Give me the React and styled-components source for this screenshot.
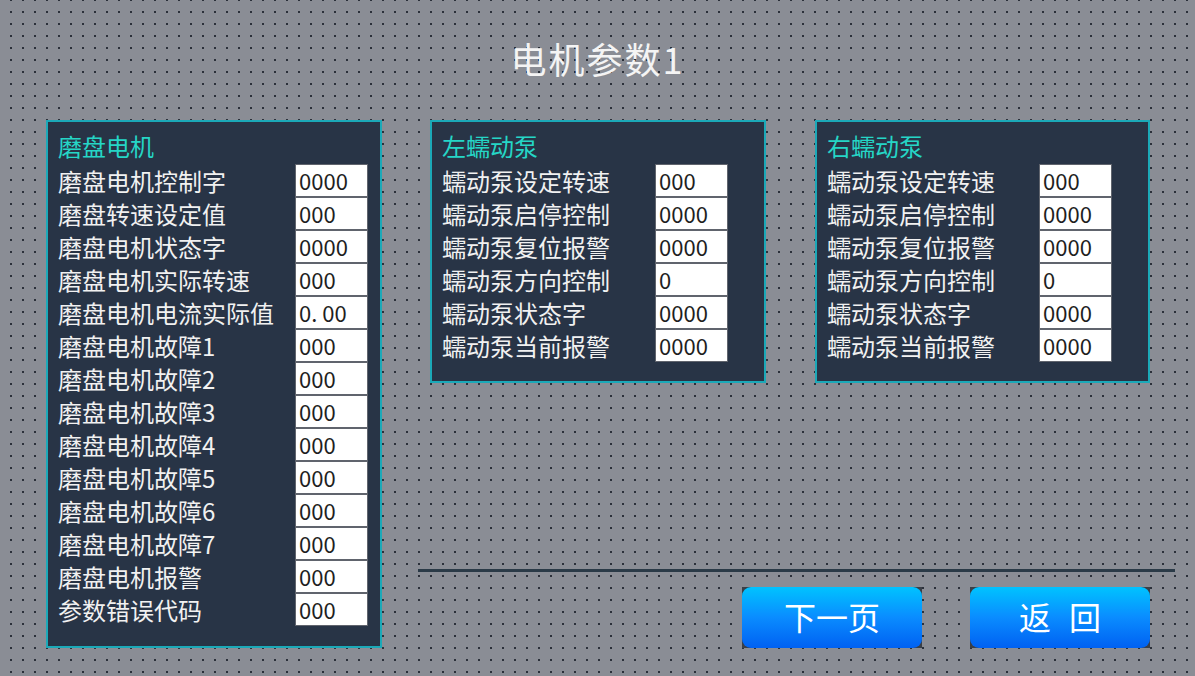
import React from "react";
import styled, { createGlobalStyle } from "styled-components";

const Global = createGlobalStyle`
  html, body { margin: 0; padding: 0; }
  body {
    width: 1195px;
    height: 676px;
    overflow: hidden;
    font-family: "Noto Sans CJK SC", "Noto Sans", sans-serif;
  }
`;

const Page = styled.div`
  width: 1195px;
  height: 676px;
  box-sizing: border-box;
  background-color: #8a8d95;
  background-image: radial-gradient(circle, #2b303a 0.9px, transparent 1.3px);
  background-size: 12px 12px;
  background-position: 5px -6px;
  display: flex;
  flex-direction: column;
`;

const Header = styled.div`
  height: 120px;
  box-sizing: border-box;
  padding-bottom: 4px;
  display: flex;
  align-items: center;
  justify-content: center;
`;

const Title = styled.h1`
  margin: 0;
  font-weight: 400;
  font-size: 36px;
  letter-spacing: 2px;
  color: #f4f4f4;
  line-height: 1;
`;

const Main = styled.div`
  display: flex;
  padding-left: 46px;
  gap: 48px;
`;

const Panel = styled.section`
  box-sizing: border-box;
  width: ${(p) => p.$w}px;
  height: ${(p) => p.$h}px;
  background: #283446;
  border: 2px solid #1ba9b8;
  padding: 0 10px;
`;

const PanelTitle = styled.div`
  box-sizing: border-box;
  height: 42px;
  padding-top: 6px;
  line-height: 36px;
  font-size: 24px;
  color: #25d6c6;
`;

const Rows = styled.div`
  display: grid;
  grid-template-columns: ${(p) => p.$label}px 73px;
  grid-auto-rows: 33px;
`;

const Label = styled.div`
  font-size: 24px;
  line-height: 33px;
  color: #f1f1f1;
  white-space: nowrap;
`;

const Value = styled.div`
  box-sizing: border-box;
  height: 33px;
  background: #ffffff;
  border: 1px solid #60646d;
  padding-left: 3px;
  font-size: 22px;
  line-height: 31px;
  color: #1e1e1e;
  white-space: pre;
`;

const RightArea = styled.div`
  width: 745px;
  display: flex;
  flex-direction: column;
`;

const TopRow = styled.div`
  display: flex;
  gap: 49px;
`;

const Divider = styled.div`
  margin-top: 186px;
  margin-left: -12px;
  width: 757px;
  height: 3px;
  background: #2a3a47;
`;

const ButtonRow = styled.div`
  margin-top: 15px;
  padding-right: 25px;
  display: flex;
  justify-content: flex-end;
  gap: 48px;
`;

const ButtonFrame = styled.div`
  width: 180px;
  height: 61px;
  background: #3a3f47;
`;

const Button = styled.button`
  width: 100%;
  height: 100%;
  border: none;
  border-radius: 9px;
  background: linear-gradient(to bottom, #00c3ff 0%, #0a8cff 50%, #0061f2 100%);
  color: #ffffff;
  font-family: "Noto Sans CJK SC", "Noto Sans", sans-serif;
  font-size: 32px;
  letter-spacing: ${(p) => p.$spacing || 0}px;
  padding: 0 0 4px ${(p) => p.$spacing || 0}px;
  cursor: pointer;
`;

const motor = [
  ["磨盘电机控制字", "0000"],
  ["磨盘转速设定值", "000"],
  ["磨盘电机状态字", "0000"],
  ["磨盘电机实际转速", "000"],
  ["磨盘电机电流实际值", "0. 00"],
  ["磨盘电机故障1", "000"],
  ["磨盘电机故障2", "000"],
  ["磨盘电机故障3", "000"],
  ["磨盘电机故障4", "000"],
  ["磨盘电机故障5", "000"],
  ["磨盘电机故障6", "000"],
  ["磨盘电机故障7", "000"],
  ["磨盘电机报警", "000"],
  ["参数错误代码", "000"],
];

const pump = [
  ["蠕动泵设定转速", "000"],
  ["蠕动泵启停控制", "0000"],
  ["蠕动泵复位报警", "0000"],
  ["蠕动泵方向控制", "0"],
  ["蠕动泵状态字", "0000"],
  ["蠕动泵当前报警", "0000"],
];

function ParamPanel({ title, rows, w, h, label }) {
  return (
    <Panel $w={w} $h={h}>
      <PanelTitle>{title}</PanelTitle>
      <Rows $label={label}>
        {rows.map(([k, v]) => (
          <React.Fragment key={k}>
            <Label>{k}</Label>
            <Value>{v}</Value>
          </React.Fragment>
        ))}
      </Rows>
    </Panel>
  );
}

export default function App() {
  return (
    <>
      <Global />
      <Page>
        <Header>
          <Title>电机参数1</Title>
        </Header>
        <Main>
          <ParamPanel title="磨盘电机" rows={motor} w={336} h={528} label={237} />
          <RightArea>
            <TopRow>
              <ParamPanel title="左蠕动泵" rows={pump} w={336} h={263} label={213} />
              <ParamPanel title="右蠕动泵" rows={pump} w={335} h={263} label={212} />
            </TopRow>
            <Divider />
            <ButtonRow>
              <ButtonFrame>
                <Button>下一页</Button>
              </ButtonFrame>
              <ButtonFrame>
                <Button $spacing={18}>返回</Button>
              </ButtonFrame>
            </ButtonRow>
          </RightArea>
        </Main>
      </Page>
    </>
  );
}
